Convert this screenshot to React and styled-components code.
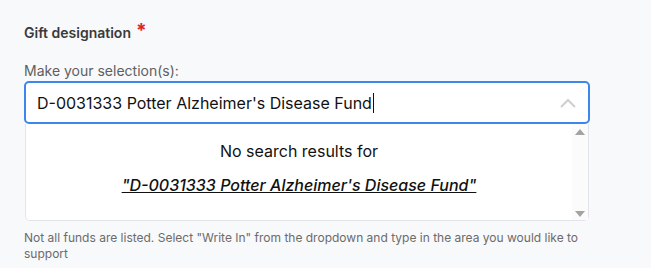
import React from "react";
import styled, { createGlobalStyle } from "styled-components";

const Global = createGlobalStyle`
  html, body { margin: 0; padding: 0; background: #f8f9fb; }
  body { font-family: Inter, "Noto Sans", sans-serif; }
`;

const Page = styled.div`
  width: 651px;
  height: 268px;
  box-sizing: border-box;
  padding: 24px 0 0 24px;
`;

const Field = styled.div`
  width: 566px;
  display: flex;
  flex-direction: column;
`;

const Label = styled.div`
  font-size: 14px;
  font-weight: 600;
  color: #3a3a3a;
  line-height: 18px;
  display: flex;
  gap: 5px;
`;

const Required = styled.span`
  color: #e02424;
  font-size: 19px;
  font-weight: 700;
  line-height: 18px;
  margin-top: -2px;
  height: 15px;
`;

const SubLabel = styled.div`
  margin-top: 20px;
  font-size: 14px;
  color: #5f5f5f;
  line-height: 17px;
`;

const InputBox = styled.div`
  margin-top: 2px;
  height: 43px;
  box-sizing: border-box;
  border: 2px solid #3d86ed;
  border-radius: 5px;
  background: #fff;
  display: flex;
  align-items: center;
  padding: 0 11px 0 11px;
`;

const InputText = styled.span`
  font-size: 16px;
  color: #111;
  flex: 1;
  display: flex;
  align-items: center;
`;

const Caret = styled.span`
  display: inline-block;
  width: 1px;
  height: 20px;
  background: #111;
  margin-left: 1px;
`;

const Menu = styled.div`
  height: 97px;
  margin-left: 1px;
  margin-right: 1px;
  box-sizing: border-box;
  border: 1px solid #e3e3ea;
  border-top: none;
  border-radius: 0 0 5px 5px;
  background: #fff;
  display: flex;
`;

const MenuBody = styled.div`
  flex: 1;
  display: flex;
  flex-direction: column;
  align-items: center;
  padding-top: 17px;
  gap: 14px;
`;

const Empty = styled.div`
  font-size: 16px;
  color: #111;
  line-height: 20px;
`;

const Query = styled.a`
  font-size: 16px;
  font-style: italic;
  font-weight: 500;
  color: #111;
  text-decoration: underline;
  line-height: 20px;
`;

const Scrollbar = styled.div`
  width: 16px;
  background: #fbfbfb;
  display: flex;
  flex-direction: column;
  justify-content: space-between;
  align-items: center;
  padding: 5px 0 3px;
`;

const Arrow = styled.div`
  width: 0;
  height: 0;
  border-left: 5px solid transparent;
  border-right: 5px solid transparent;
  ${(p) => (p.$down ? "border-top: 6px solid #a3a3a3;" : "border-bottom: 6px solid #a3a3a3;")}
`;

const Help = styled.div`
  margin-top: 9px;
  font-size: 12px;
  color: #6b6b6b;
  line-height: 16px;
  width: 600px;
`;

export default function App() {
  return (
    <Page>
      <Global />
      <Field>
        <Label>
          Gift designation <Required>*</Required>
        </Label>
        <SubLabel>Make your selection(s):</SubLabel>
        <InputBox>
          <InputText>
            D-0031333 Potter Alzheimer's Disease Fund
            <Caret />
          </InputText>
          <svg width="18" height="12" viewBox="0 0 18 12">
            <path d="M2 10 L9 3 L16 10" fill="none" stroke="#cfcfcf" strokeWidth="2" />
          </svg>
        </InputBox>
        <Menu>
          <MenuBody>
            <Empty>No search results for</Empty>
            <Query>"D-0031333 Potter Alzheimer's Disease Fund"</Query>
          </MenuBody>
          <Scrollbar>
            <Arrow />
            <Arrow $down />
          </Scrollbar>
        </Menu>
      </Field>
      <Help>
        Not all funds are listed. Select "Write In" from the dropdown and type in the area you would like to
        support
      </Help>
    </Page>
  );
}
